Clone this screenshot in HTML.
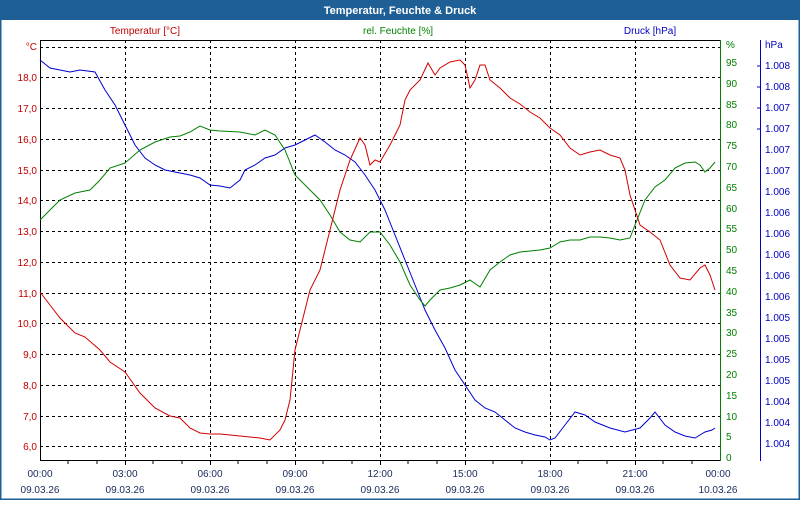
<!DOCTYPE html>
<html><head><meta charset="utf-8"><style>
body{margin:0;width:800px;height:500px;overflow:hidden;background:#fff;font-family:"Liberation Sans",sans-serif}
</style></head><body>
<svg width="800" height="500" xmlns="http://www.w3.org/2000/svg" font-family="Liberation Sans, sans-serif" font-size="10">
<rect x="0" y="0" width="800" height="500" fill="#fff"/>
<rect x="0" y="0" width="800" height="20" fill="#1e5f96"/>
<rect x="0.5" y="0.5" width="799" height="499" fill="none" stroke="#1e5f96" stroke-width="2"/>
<text x="400" y="14" fill="#fff" font-weight="bold" font-size="11" text-anchor="middle">Temperatur, Feuchte &amp; Druck</text>
<text x="145" y="34" fill="#c00000" text-anchor="middle">Temperatur [°C]</text>
<text x="398" y="34" fill="#008000" text-anchor="middle">rel. Feuchte [%]</text>
<text x="650" y="34" fill="#0000c0" text-anchor="middle">Druck [hPa]</text>
<g stroke="#000" stroke-dasharray="3,3" stroke-width="1">
<line x1="125.5" y1="40" x2="125.5" y2="460"/><line x1="210.5" y1="40" x2="210.5" y2="460"/><line x1="295.5" y1="40" x2="295.5" y2="460"/><line x1="380.5" y1="40" x2="380.5" y2="460"/><line x1="465.5" y1="40" x2="465.5" y2="460"/><line x1="550.5" y1="40" x2="550.5" y2="460"/><line x1="635.5" y1="40" x2="635.5" y2="460"/>
<line x1="40" y1="47.5" x2="720" y2="47.5"/><line x1="40" y1="77.5" x2="720" y2="77.5"/><line x1="40" y1="108.5" x2="720" y2="108.5"/><line x1="40" y1="139.5" x2="720" y2="139.5"/><line x1="40" y1="170.5" x2="720" y2="170.5"/><line x1="40" y1="200.5" x2="720" y2="200.5"/><line x1="40" y1="231.5" x2="720" y2="231.5"/><line x1="40" y1="262.5" x2="720" y2="262.5"/><line x1="40" y1="293.5" x2="720" y2="293.5"/><line x1="40" y1="323.5" x2="720" y2="323.5"/><line x1="40" y1="354.5" x2="720" y2="354.5"/><line x1="40" y1="385.5" x2="720" y2="385.5"/><line x1="40" y1="416.5" x2="720" y2="416.5"/><line x1="40" y1="446.5" x2="720" y2="446.5"/>
</g>
<line x1="40" y1="40.5" x2="720" y2="40.5" stroke="#000"/>
<line x1="40.5" y1="40" x2="40.5" y2="461" stroke="#000"/>
<line x1="40" y1="460.5" x2="720" y2="460.5" stroke="#000"/>
<line x1="720.5" y1="40" x2="720.5" y2="461" stroke="#008000"/>
<line x1="760.5" y1="40" x2="760.5" y2="461" stroke="#0000c0"/>
<g fill="#c00000" text-anchor="end">
<text x="37" y="50">°C</text><text x="37" y="81">18,0</text><text x="37" y="112">17,0</text><text x="37" y="143">16,0</text><text x="37" y="174">15,0</text><text x="37" y="204">14,0</text><text x="37" y="235">13,0</text><text x="37" y="266">12,0</text><text x="37" y="297">11,0</text><text x="37" y="327">10,0</text><text x="37" y="358">9,0</text><text x="37" y="389">8,0</text><text x="37" y="420">7,0</text><text x="37" y="450">6,0</text>
</g>
<g fill="#008000" font-size="10">
<text x="726" y="48">%</text>
<text x="726" y="66">95</text><text x="726" y="87">90</text><text x="726" y="108">85</text><text x="726" y="128">80</text><text x="726" y="149">75</text><text x="726" y="170">70</text><text x="726" y="191">65</text><text x="726" y="212">60</text><text x="726" y="232">55</text><text x="726" y="253">50</text><text x="726" y="274">45</text><text x="726" y="295">40</text><text x="726" y="316">35</text><text x="726" y="336">30</text><text x="726" y="357">25</text><text x="726" y="378">20</text><text x="726" y="399">15</text><text x="726" y="420">10</text><text x="726" y="440">5</text><text x="726" y="461">0</text>
</g>
<g fill="#0000c0">
<text x="765" y="48">hPa</text>
<text x="765" y="69">1.008</text><text x="765" y="90">1.008</text><text x="765" y="111">1.007</text><text x="765" y="132">1.007</text><text x="765" y="153">1.007</text><text x="765" y="174">1.007</text><text x="765" y="195">1.006</text><text x="765" y="216">1.006</text><text x="765" y="237">1.006</text><text x="765" y="258">1.006</text><text x="765" y="279">1.006</text><text x="765" y="300">1.006</text><text x="765" y="321">1.005</text><text x="765" y="342">1.005</text><text x="765" y="363">1.005</text><text x="765" y="384">1.005</text><text x="765" y="405">1.004</text><text x="765" y="426">1.004</text><text x="765" y="447">1.004</text>
</g>
<g stroke="#0000c0"><line x1="757" y1="66" x2="760" y2="66"/><line x1="757" y1="87" x2="760" y2="87"/><line x1="757" y1="108" x2="760" y2="108"/><line x1="757" y1="129" x2="760" y2="129"/></g>
<g stroke="#000">
<line x1="68" y1="460" x2="68" y2="464"/><line x1="97" y1="460" x2="97" y2="464"/><line x1="125.5" y1="460" x2="125.5" y2="465"/><line x1="153" y1="460" x2="153" y2="464"/><line x1="182" y1="460" x2="182" y2="464"/><line x1="210.5" y1="460" x2="210.5" y2="465"/><line x1="238" y1="460" x2="238" y2="464"/><line x1="267" y1="460" x2="267" y2="464"/><line x1="295.5" y1="460" x2="295.5" y2="465"/><line x1="323" y1="460" x2="323" y2="464"/><line x1="352" y1="460" x2="352" y2="464"/><line x1="380.5" y1="460" x2="380.5" y2="465"/><line x1="408" y1="460" x2="408" y2="464"/><line x1="437" y1="460" x2="437" y2="464"/><line x1="465.5" y1="460" x2="465.5" y2="465"/><line x1="493" y1="460" x2="493" y2="464"/><line x1="522" y1="460" x2="522" y2="464"/><line x1="550.5" y1="460" x2="550.5" y2="465"/><line x1="578" y1="460" x2="578" y2="464"/><line x1="607" y1="460" x2="607" y2="464"/><line x1="635.5" y1="460" x2="635.5" y2="465"/><line x1="663" y1="460" x2="663" y2="464"/><line x1="692" y1="460" x2="692" y2="464"/>
</g>
<g fill="#1a2a5a" text-anchor="middle">
<text x="40" y="477">00:00</text><text x="40" y="493">09.03.26</text>
<text x="125" y="477">03:00</text><text x="125" y="493">09.03.26</text>
<text x="210" y="477">06:00</text><text x="210" y="493">09.03.26</text>
<text x="295" y="477">09:00</text><text x="295" y="493">09.03.26</text>
<text x="380" y="477">12:00</text><text x="380" y="493">09.03.26</text>
<text x="465" y="477">15:00</text><text x="465" y="493">09.03.26</text>
<text x="550" y="477">18:00</text><text x="550" y="493">09.03.26</text>
<text x="635" y="477">21:00</text><text x="635" y="493">09.03.26</text>
<text x="718" y="477">00:00</text><text x="718" y="493">10.03.26</text>
</g>
<polyline fill="none" stroke="#0000d0" points="40,60 50,68 60,70 70,72 80,70 95,72 105,90 115,105 125,125 135,145 145,158 155,165 165,170 175,172 190,175 200,178 210,185 220,186 230,188 240,180 245,170 255,165 265,158 275,155 285,148 295,145 305,140 315,135 325,142 335,150 345,155 355,162 365,175 375,190 385,210 395,235 405,260 415,285 425,310 435,330 445,348 455,370 465,385 475,400 485,408 495,412 505,420 515,428 525,432 535,435 545,437 550,440 555,438 565,425 575,412 585,415 595,422 610,428 625,432 640,428 650,418 655,412 665,425 675,432 685,436 695,438 705,432 712,430 715,428"/>
<polyline fill="none" stroke="#008000" points="40,220 50,210 60,200 75,193 90,190 100,180 110,168 125,163 140,150 155,142 170,137 180,136 190,132 200,126 210,130 220,131 240,132 255,135 265,130 275,135 285,150 295,175 310,190 320,200 330,215 340,232 350,240 360,242 370,232 380,232 390,245 400,262 410,285 420,300 425,306 430,300 440,290 450,288 460,285 470,280 480,287 490,270 500,262 510,255 520,252 540,250 550,248 560,242 570,240 580,240 590,237 600,237 610,238 620,240 630,238 635,225 645,200 655,187 665,180 675,168 685,163 695,162 700,165 705,172 710,168 715,162"/>
<polyline fill="none" stroke="#d00000" points="40,292 50,305 60,318 75,333 85,337 100,350 110,362 125,372 140,393 155,408 170,416 180,418 190,428 200,433 210,434 220,434 240,436 260,438 270,440 280,430 285,420 290,400 295,350 300,330 310,290 320,270 330,230 340,190 350,160 360,138 365,145 370,165 375,160 380,162 390,145 400,125 405,100 410,90 420,80 428,63 435,75 440,68 450,62 460,60 465,65 470,88 475,80 480,65 485,65 490,80 500,88 510,98 520,104 530,112 540,118 550,128 560,135 570,148 580,155 590,152 600,150 610,155 620,158 625,170 630,195 640,225 650,232 660,240 670,265 680,278 690,280 700,268 705,265 710,275 715,290"/>
</svg>
</body></html>
